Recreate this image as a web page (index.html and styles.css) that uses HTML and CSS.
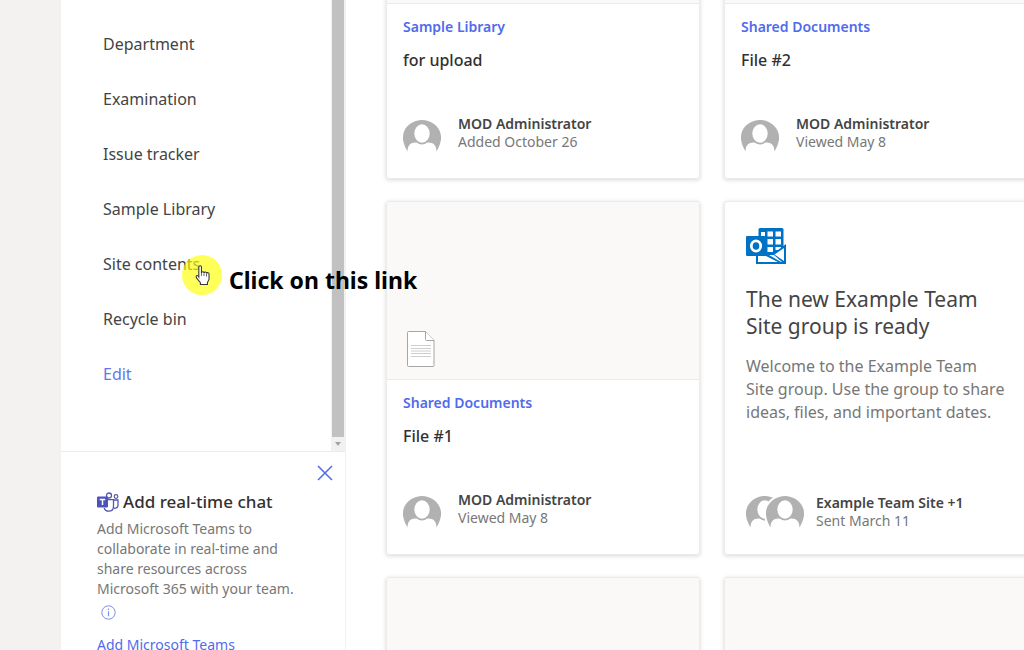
FILE: index.html
```html
<!DOCTYPE html>
<html lang="en">
<head>
	<meta charset="UTF-8">
	<title>Example Team Site</title>
	<link rel="stylesheet" href="styles.css">
</head>
<body>
	<svg class="sprite" aria-hidden="true">
		<symbol id="avatar" viewBox="0 0 38 32">
			<path d="M4.500 31.500C-8 11 8 0 19 0S46 11 33.500 31.500C33.500 25 30 22 24.500 22.500Q19 26.500 13.500 22.500C8 22 4.500 25 4.500 31.500Z" fill="#b1b1b1"/>
			<ellipse cx="19" cy="13.500" rx="7.700" ry="9.300" fill="#fff"/>
		</symbol>
	</svg>
	<div class="page">
		<aside class="sidebar">
			<div class="nav-wrap">
				<nav class="nav">
					<a href="#">Department</a>
					<a href="#">Examination</a>
					<a href="#">Issue tracker</a>
					<a href="#">Sample Library</a>
					<a href="#">Site contents</a>
					<a href="#">Recycle bin</a>
					<a href="#" class="edit">Edit</a>
				</nav>
				<div class="scrollbar">
					<div class="thumb"></div>
					<svg class="arrow" viewBox="0 0 14 14"><path d="M4 5h6l-3 4z" fill="#a3a3a3"/></svg>
				</div>
			</div>
			<section class="chat">
				<button class="close" aria-label="Close">
					<svg width="16" height="16" viewBox="0 0 16 16"><path d="M1 1l14 14M15 1L1 15" stroke="#4f6bed" stroke-width="1.500"/></svg>
				</button>
				<h2 class="chat-title">
					<svg width="22" height="21" viewBox="0 0 22 21" fill="none" stroke="#5558af">
						<circle cx="12" cy="3.500" r="2.500" stroke-width="1.300"/>
						<circle cx="19" cy="4.500" r="1.800" stroke-width="1.200"/>
						<path d="M10 7.700h6.500v6.500c0 3-2 5-4.700 5-2.300 0-4-1.200-4.600-3.200M16.500 8h4.500v5c0 2.200-1.500 3.400-4 3.400" stroke-width="1.300"/>
						<rect x="0" y="4.500" width="11" height="11" rx="1" fill="#4b53bc" stroke="none"/>
						<path d="M2.700 7.500h5.600M5.500 7.500v5.500" stroke="#fff" stroke-width="1.500"/>
					</svg>
					Add real-time chat
				</h2>
				<p class="chat-text">Add Microsoft Teams to collaborate in real-time and share resources across Microsoft 365 with your team.</p>
				<button class="info" aria-label="More information">
					<svg width="15" height="15" viewBox="0 0 15 15"><circle cx="7.500" cy="7.500" r="6.700" fill="none" stroke="#7a8ff2"/><path d="M7.500 6.200v5M7.500 3.600v1.300" stroke="#7a8ff2" stroke-width="1.200"/></svg>
				</button>
				<a href="#" class="chat-link">Add Microsoft Teams</a>
			</section>
		</aside>

		<main class="main">
			<div class="cards">
				<article class="card">
					<div class="preview"></div>
					<div class="card-body">
						<a href="#" class="library">Sample Library</a>
						<h3 class="file">for upload</h3>
						<div class="person">
							<svg class="avatar"><use href="#avatar"/></svg>
							<div>
								<div class="name">MOD Administrator</div>
								<div class="date">Added October 26</div>
							</div>
						</div>
					</div>
				</article>
				<article class="card">
					<div class="preview"></div>
					<div class="card-body">
						<a href="#" class="library">Shared Documents</a>
						<h3 class="file">File #2</h3>
						<div class="person">
							<svg class="avatar"><use href="#avatar"/></svg>
							<div>
								<div class="name">MOD Administrator</div>
								<div class="date">Viewed May 8</div>
							</div>
						</div>
					</div>
				</article>
				<article class="card">
					<div class="preview">
						<svg width="28" height="36" viewBox="0 0 28 36">
							<path d="M1.500.500h17l8.500 9v25a1 1 0 0 1-1 1h-24.500a1 1 0 0 1-1-1v-33a1 1 0 0 1 1-1z" fill="#fff" stroke="#a6a6a6"/>
							<path d="M18.500.500v8a1 1 0 0 0 1 1h7.500" fill="#fff" stroke="#a6a6a6"/>
							<path d="M4 14.500h20M4 17.500h20M4 20h20M4 22.500h20M4 25.500h20" stroke="#cfcfcf"/>
						</svg>
					</div>
					<div class="card-body">
						<a href="#" class="library">Shared Documents</a>
						<h3 class="file">File #1</h3>
						<div class="person">
							<svg class="avatar"><use href="#avatar"/></svg>
							<div>
								<div class="name">MOD Administrator</div>
								<div class="date">Viewed May 8</div>
							</div>
						</div>
					</div>
				</article>
				<article class="card mail">
					<svg width="40" height="36" viewBox="0 0 40 36">
						<rect x="12.500" y="0" width="25" height="26" rx="1.500" fill="#0072c6"/>
						<path d="M15 4h4v4h-4zM21.500 3.500h5.500v5h-5.500zM29.500 3.500h5.500v5h-5.500zM21.500 11h5.500v5.500h-5.500zM29.500 11h5.500v5.500h-5.500zM21.500 19h5.500v5h-5.500zM29.500 19h5.500v3h-5.500z" fill="#fff"/>
						<path d="M40 16v20H10V26h10l8-1z" fill="#0072c6"/>
						<path d="M38 20v13l-9.500-6.500zM12 28h8l12 6H12z" fill="#fff"/>
						<path d="M23 27l5 0 8 7h-1z" fill="#fff"/>
						<rect x="0" y="8" width="20" height="20" rx="1" fill="#0072c6"/>
						<ellipse cx="10" cy="18" rx="4.700" ry="5.200" fill="none" stroke="#fff" stroke-width="2.800"/>
					</svg>
					<h3 class="mail-title">The new Example Team Site group is ready</h3>
					<p class="mail-text">Welcome to the Example Team Site group. Use the group to share ideas, files, and important dates.</p>
					<div class="person">
						<svg class="avatar-pair" viewBox="0 0 58 32">
							<use href="#avatar" width="38" height="32"/>
							<ellipse cx="39" cy="18" rx="21" ry="20" fill="#fff"/>
							<use href="#avatar" x="20" width="38" height="32"/>
						</svg>
						<div>
							<div class="name">Example Team Site +1</div>
							<div class="date">Sent March 11</div>
						</div>
					</div>
				</article>
				<article class="card"><div class="preview"></div></article>
				<article class="card"><div class="preview"></div></article>
			</div>
		</main>
	</div>

	<div class="callout">
		<span class="spot">
			<svg width="15" height="21" viewBox="0 0 14 20"><path d="M3.500 11.500V2a1.200 1.200 0 0 1 2.500 0v5.500a1.200 1.200 0 0 1 2.400.200 1.200 1.200 0 0 1 2.400.500 1.200 1.200 0 0 1 2.400.600v5l-1.500 3v1.700H5v-1.700L1.500 12.500C0 10 2 9 3.500 11.500z" fill="#fff" stroke="#333"/><path d="M6 7.500v3M8.400 8v2.500M10.800 8.500v2.500" stroke="#333" stroke-width=".7"/></svg>
		</span>
		<span>Click on this link</span>
	</div>
</body>
</html>
```
FILE: styles.css
```css
* {
	box-sizing: border-box;
}
body {
	margin: 0;
	height: 100vh;
	overflow: hidden;
	background: #f3f2f1;
	font-family: "Noto Sans", "Open Sans", sans-serif;
	color: #323130;
}
h2, h3, p {
	margin: 0;
}
a {
	color: #4f6bed;
	text-decoration: none;
}
button {
	padding: 0;
	border: none;
	background: none;
}
svg {
	display: block;
	flex: none;
}
.sprite {
	position: absolute;
	width: 0;
	height: 0;
}
.page {
	display: flex;
	height: 100%;
	padding-left: 60px;
}

/* left column */
.sidebar {
	display: flex;
	flex-direction: column;
	flex: none;
	width: 286px;
	border: solid #f0f0f0;
	border-width: 0 1px;
	background: #fff;
}
.nav-wrap {
	display: flex;
}
.nav {
	flex: 1;
	padding: 17px 0 49px 42px;
}
.nav a {
	display: block;
	font-size: 16px;
	line-height: 55px;
	color: #444;
}
.nav .edit {
	color: #5f78ee;
}
.scrollbar {
	display: flex;
	flex-direction: column;
	width: 14px;
	background: #f1f1f1;
}
.thumb {
	flex: 1;
	margin: 0 1px;
	background: #c1c1c1;
}
.arrow {
	width: 14px;
	height: 14px;
}
.chat {
	display: flex;
	flex-direction: column;
	align-items: flex-start;
	padding: 13px 12px 0 36px;
	border-top: 1px solid #edebe9;
}
.close {
	align-self: flex-end;
}
.chat-title {
	display: flex;
	align-items: center;
	gap: 4px;
	margin-top: 8px;
	font-size: 17px;
	line-height: 26px;
	font-weight: 500;
	white-space: nowrap;
}
.chat-text {
	width: 210px;
	margin-top: 4px;
	font-size: 14px;
	line-height: 20px;
	color: #777;
}
.info {
	margin: 6px 0 0 4px;
}
.chat-link {
	margin-top: 15px;
	font-size: 14px;
	line-height: 20px;
}

/* activity cards */
.main {
	flex: 1;
	min-width: 0;
	padding-left: 40px;
	overflow: hidden;
	background: #fff;
}
.cards {
	display: grid;
	grid-template-columns: repeat(2, 314px);
	grid-auto-rows: 354px;
	gap: 22px 24px;
	margin-top: -175px;
}
.card {
	border: 1px solid #edebe9;
	border-radius: 3px;
	background: #fff;
	box-shadow: 0 1px 4px rgba(0, 0, 0, .16);
	overflow: hidden;
}
.preview {
	display: flex;
	align-items: flex-end;
	height: 178px;
	padding: 0 20px 12px;
	border-bottom: 1px solid #edebe9;
	background: #faf9f8;
}
.card-body {
	padding: 13px 16px;
}
.library {
	display: block;
	font-size: 14px;
	line-height: 20px;
	font-weight: 600;
}
.file {
	margin-top: 11px;
	font-size: 16px;
	line-height: 24px;
	font-weight: 500;
}
.person {
	display: flex;
	align-items: center;
	gap: 17px;
	margin-top: 42px;
}
.avatar {
	width: 38px;
	height: 32px;
	margin-top: 6px;
}
.name {
	font-size: 14px;
	line-height: 18px;
	font-weight: 600;
	color: #444;
}
.date {
	font-size: 14px;
	line-height: 18px;
	color: #777;
}
.mail {
	padding: 26px 21px 0;
}
.mail-title {
	width: 260px;
	margin-top: 22px;
	font-size: 21px;
	line-height: 27px;
	font-weight: 400;
	color: #444;
}
.mail-text {
	width: 262px;
	margin-top: 15px;
	font-size: 16px;
	line-height: 23px;
	color: #777;
}
.mail .person {
	gap: 12px;
	margin-top: 70px;
}
.avatar-pair {
	width: 58px;
	height: 32px;
}

/* click hint over the page */
.callout {
	position: absolute;
	top: 255px;
	left: 182px;
	display: flex;
	gap: 7px;
	font-size: 23px;
	font-weight: 700;
	line-height: 50px;
	color: #000;
}
.spot {
	display: flex;
	align-items: center;
	justify-content: center;
	width: 40px;
	height: 40px;
	border-radius: 50%;
	background: rgba(255, 255, 0, .65);
}
```
